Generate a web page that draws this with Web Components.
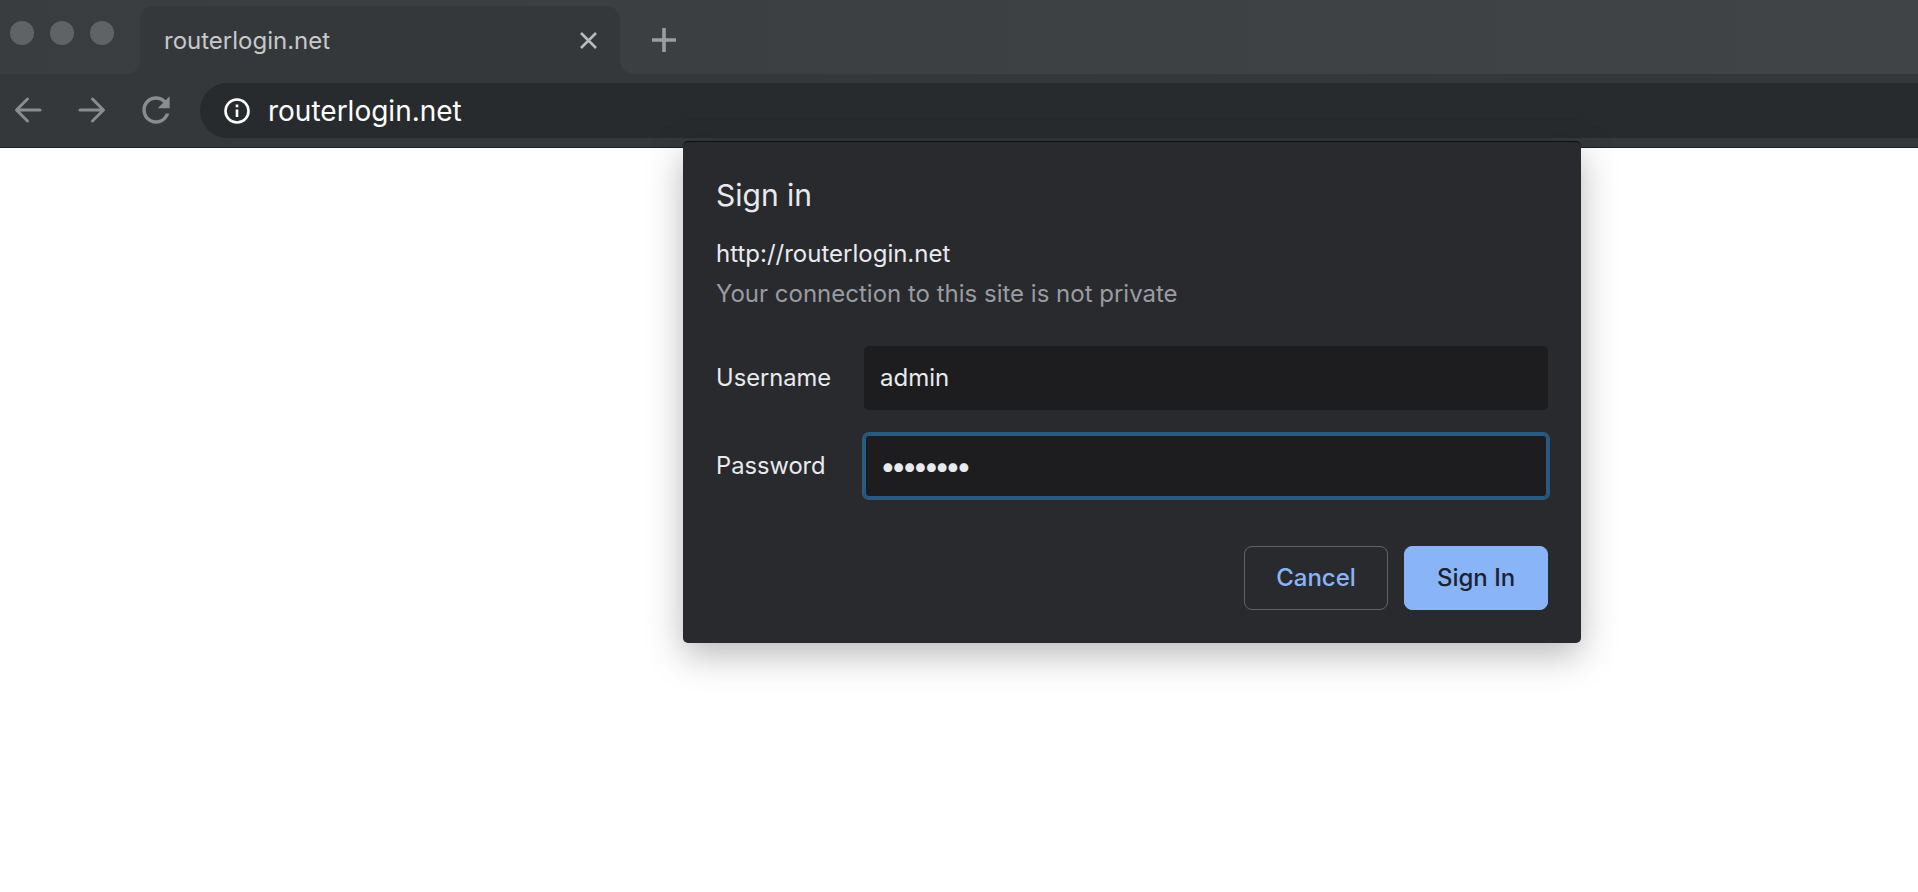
<!DOCTYPE html>
<html>
<head>
<meta charset="utf-8">
<title>routerlogin.net</title>
<style>
  html, body { margin: 0; height: 100%; overflow: hidden; background: #fff; }
  body { font-family: Inter, "Liberation Sans", sans-serif; }
</style>
</head>
<body>
<browser-window>
  <tab-strip title-text="routerlogin.net"></tab-strip>
  <nav-toolbar url="routerlogin.net"></nav-toolbar>
  <page-view>
    <signin-dialog origin="http://routerlogin.net" note="Your connection to this site is not private">
      <form-field label="Username" value="admin"></form-field>
      <form-field label="Password" value="••••••••" focused></form-field>
      <dialog-button slot="actions">Cancel</dialog-button>
      <dialog-button slot="actions" primary>Sign In</dialog-button>
    </signin-dialog>
  </page-view>
</browser-window>

<script>
class BrowserWindow extends HTMLElement {
  constructor() {
    super();
    this.attachShadow({ mode: 'open' }).innerHTML = `
      <style>
        :host { display: flex; flex-direction: column; height: 100vh; }
      </style>
      <slot></slot>
    `;
  }
}

class TabStrip extends HTMLElement {
  constructor() {
    super();
    this.attachShadow({ mode: 'open' }).innerHTML = `
      <style>
        :host {
          display: flex;
          align-items: flex-start;
          height: 74px;
          background: linear-gradient(90deg, #3a3d40, #404447);
        }
        .lights {
          display: flex;
          gap: 16px;
          width: 130px;
          padding: 21px 0 0 10px;
        }
        .lights i {
          width: 24px;
          height: 24px;
          border-radius: 50%;
          background: #606366;
        }
        .tab {
          position: relative;
          box-sizing: border-box;
          display: flex;
          align-items: center;
          justify-content: space-between;
          width: 480px;
          height: 68px;
          margin-top: 6px;
          padding: 0 23px 0 24px;
          border-radius: 14px 14px 0 0;
          background: #35383b;
          color: #c6c8ca;
          font-size: 24px;
        }
        .tab::before, .tab::after {
          content: "";
          position: absolute;
          bottom: 0;
          width: 14px;
          height: 14px;
        }
        .tab::before {
          left: -14px;
          background: radial-gradient(circle at 0 0, transparent 13.5px, #35383b 14.5px);
        }
        .tab::after {
          right: -14px;
          background: radial-gradient(circle at 100% 0, transparent 13.5px, #35383b 14.5px);
        }
        svg { display: block; }
        .plus { margin: 6px 0 0 32px; height: 68px; display: flex; align-items: center; }
      </style>
      <div class="lights"><i></i><i></i><i></i></div>
      <div class="tab">
        <span>${this.getAttribute('title-text')}</span>
        <svg width="17" height="17" viewBox="0 0 17 17" fill="none" stroke="#b9bbbd" stroke-width="2.6">
          <path d="M1 1l15 15M16 1L1 16"/>
        </svg>
      </div>
      <div class="plus">
        <svg width="24" height="24" viewBox="0 0 24 24" fill="none" stroke="#9b9da0" stroke-width="3.6">
          <path d="M12 0v24M0 12h24"/>
        </svg>
      </div>
    `;
  }
}

class NavToolbar extends HTMLElement {
  constructor() {
    super();
    this.attachShadow({ mode: 'open' }).innerHTML = `
      <style>
        :host {
          display: flex;
          align-items: center;
          gap: 36px;
          height: 55px;
          padding: 9px 0 9px 14px;
          background: #34383b;
          border-bottom: 1px solid #1e2022;
        }
        svg { display: block; flex: none; }
        .bar {
          flex: 1;
          display: flex;
          align-items: center;
          gap: 18px;
          height: 55px;
          margin-left: -6px;
          padding-left: 24px;
          border-radius: 28px 0 0 28px;
          background: #282b2d;
          color: #fff;
          font-size: 28px;
        }
        .nav { margin-top: -2px; }
      </style>
      <svg class="nav" width="28" height="28" viewBox="0 0 28 28" fill="none" stroke="#8a8c8e" stroke-width="3" stroke-linecap="round" stroke-linejoin="round">
        <path d="M26 14H3M13.5 3L2.5 14l11 11"/>
      </svg>
      <svg class="nav" width="28" height="28" viewBox="0 0 28 28" fill="none" stroke="#8a8c8e" stroke-width="3" stroke-linecap="round" stroke-linejoin="round">
        <path d="M2 14h23M14.5 3l11 11-11 11"/>
      </svg>
      <svg class="nav" width="28" height="28" viewBox="3.8 3.8 16.4 16.4" fill="#8a8c8e">
        <path d="M17.65 6.35C16.2 4.9 14.21 4 12 4c-4.42 0-7.99 3.58-7.99 8s3.57 8 7.99 8c3.73 0 6.84-2.55 7.73-6h-2.08c-.82 2.33-3.04 4-5.65 4-3.31 0-6-2.69-6-6s2.69-6 6-6c1.66 0 3.14.69 4.22 1.78L13 11h7V4l-2.35 2.35z"/>
      </svg>
      <div class="bar">
        <svg width="26" height="26" viewBox="0 0 26 26" fill="none" stroke="#fff" stroke-width="2.6">
          <circle cx="13" cy="13" r="11.5"/>
          <path d="M13 11.5v7.5M13 6.5v2.8"/>
        </svg>
        <span>${this.getAttribute('url')}</span>
      </div>
    `;
  }
}

class PageView extends HTMLElement {
  constructor() {
    super();
    this.attachShadow({ mode: 'open' }).innerHTML = `
      <style>
        :host { display: block; position: relative; flex: 1; background: #fff; }
      </style>
      <slot></slot>
    `;
  }
}

class SigninDialog extends HTMLElement {
  constructor() {
    super();
    this.attachShadow({ mode: 'open' }).innerHTML = `
      <style>
        :host {
          position: absolute;
          left: 683px;
          top: -7px;
          box-sizing: border-box;
          display: flex;
          flex-direction: column;
          width: 898px;
          height: 502px;
          padding: 35px 33px 33px;
          border-top: 1px solid #0f1011;
          border-radius: 5px;
          background: #292a2e;
          color: #e8eaed;
          box-shadow: 0 12px 36px rgba(0, 0, 0, 0.28);
        }
        h2 { margin: 0 0 21px; font-size: 30px; line-height: 36px; font-weight: 400; }
        p { margin: 0; font-size: 24px; line-height: 40px; }
        .note { color: #999ca0; }
        .fields { display: flex; flex-direction: column; gap: 24px; margin-top: 32px; }
        .actions { display: flex; justify-content: flex-end; gap: 16px; margin-top: 48px; }
      </style>
      <h2>Sign in</h2>
      <p>${this.getAttribute('origin')}</p>
      <p class="note">${this.getAttribute('note')}</p>
      <div class="fields"><slot></slot></div>
      <div class="actions"><slot name="actions"></slot></div>
    `;
  }
}

class FormField extends HTMLElement {
  constructor() {
    super();
    this.attachShadow({ mode: 'open' }).innerHTML = `
      <style>
        :host {
          display: grid;
          grid-template-columns: 148px 1fr;
          align-items: center;
          font-size: 24px;
        }
        .label { font-size: 23.7px; margin-top: -1px; }
        .input {
          box-sizing: border-box;
          height: 64px;
          padding: 0 16px;
          line-height: 64px;
          border-radius: 5px;
          background: #1d1d1f;
          color: #e8eaed;
        }
        :host([focused]) .input {
          box-shadow: 0 0 0 2px #2b5a80, inset 0 0 0 2px #2b5a80;
          font-size: 28px;
          letter-spacing: -4.9px;
        }
      </style>
      <span class="label">${this.getAttribute('label')}</span>
      <div class="input">${this.getAttribute('value')}</div>
    `;
  }
}

class DialogButton extends HTMLElement {
  constructor() {
    super();
    this.attachShadow({ mode: 'open' }).innerHTML = `
      <style>
        :host {
          box-sizing: border-box;
          display: flex;
          align-items: center;
          justify-content: center;
          width: 144px;
          height: 64px;
          padding-bottom: 2px;
          border: 1px solid #5f6368;
          border-radius: 8px;
          color: #8ab4f8;
          font-size: 24px;
          font-weight: 500;
        }
        :host([primary]) {
          border-color: #8ab4f8;
          background: #8ab4f8;
          color: #1b2330;
        }
      </style>
      <slot></slot>
    `;
  }
}

customElements.define('browser-window', BrowserWindow);
customElements.define('tab-strip', TabStrip);
customElements.define('nav-toolbar', NavToolbar);
customElements.define('page-view', PageView);
customElements.define('signin-dialog', SigninDialog);
customElements.define('form-field', FormField);
customElements.define('dialog-button', DialogButton);
</script>
</body>
</html>
